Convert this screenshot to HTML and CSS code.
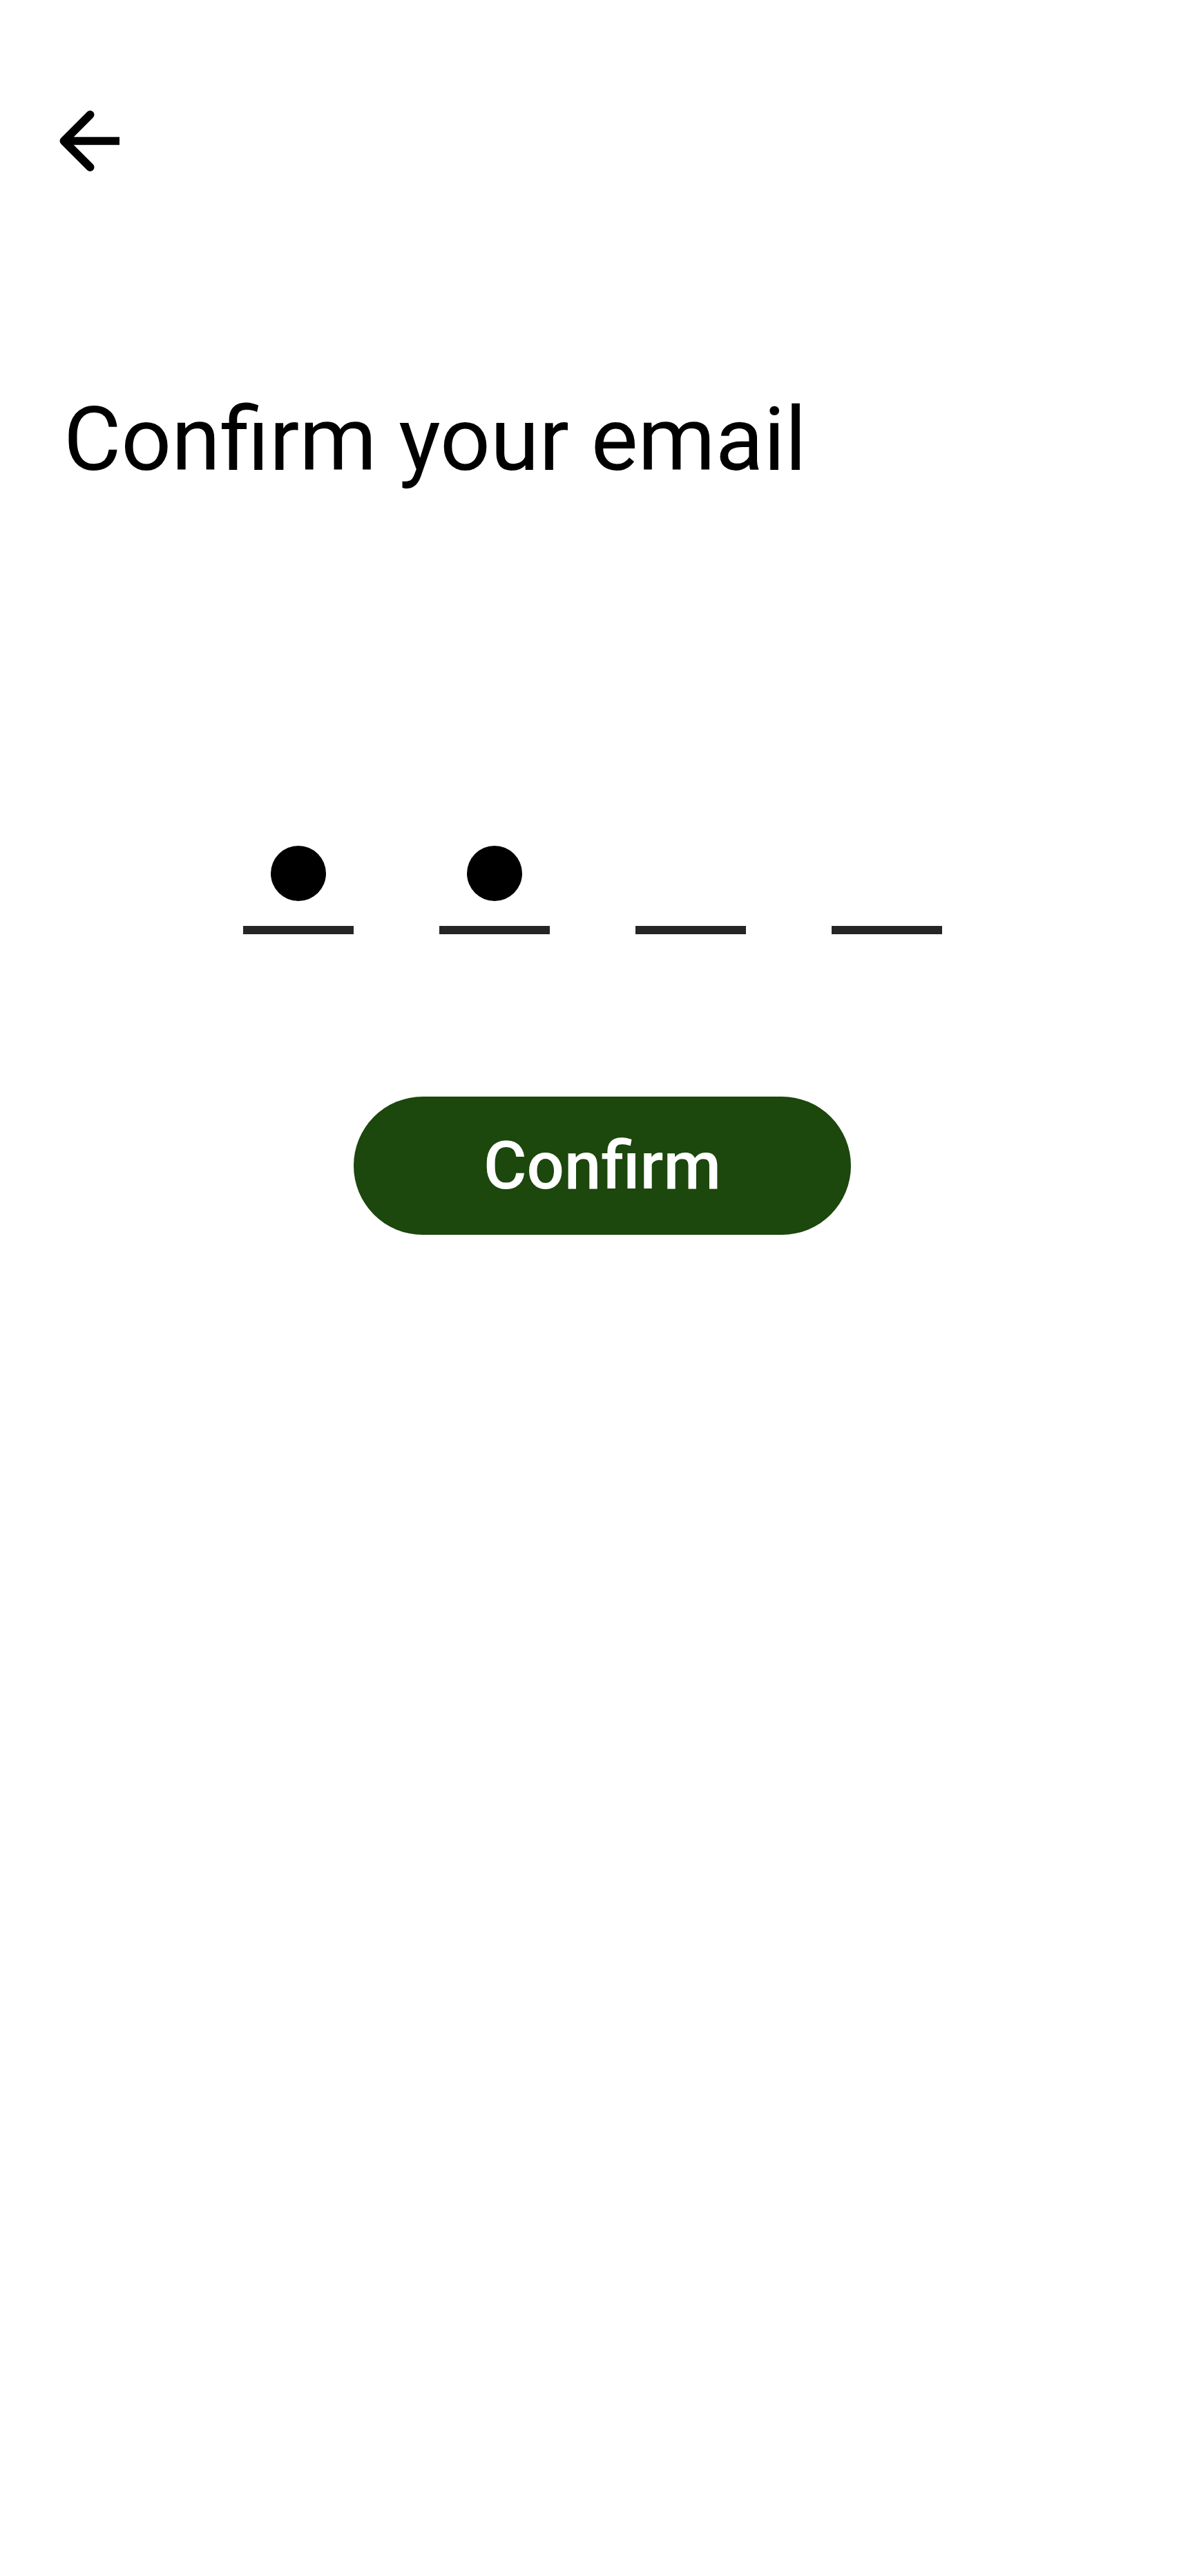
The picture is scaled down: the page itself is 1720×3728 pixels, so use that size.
FILE: index.html
```html
<!DOCTYPE html>
<html lang="en">
<head>
<meta charset="utf-8">
<title>Confirm your email</title>
<link rel="stylesheet" href="styles.css">
</head>
<body>
<div class="screen">
  <header class="topbar">
    <button class="back" aria-label="Back">
      <svg class="back-icon" width="100" height="100" viewBox="0 0 100 100">
        <polyline points="50.5,16 12.5,54 50.5,92" fill="none" stroke="#000" stroke-width="12" stroke-linecap="round" stroke-linejoin="round"/>
        <line x1="13" y1="54" x2="93" y2="54" stroke="#000" stroke-width="11.5" stroke-linecap="butt"/>
      </svg>
    </button>
  </header>
  <h1 class="title">Confirm your email</h1>
  <div class="otp">
    <div class="cell"><span class="dot"></span><span class="bar"></span></div>
    <div class="cell"><span class="dot"></span><span class="bar"></span></div>
    <div class="cell"><span class="bar"></span></div>
    <div class="cell"><span class="bar"></span></div>
  </div>
  <div class="actions">
    <button class="confirm">Confirm</button>
  </div>
</div>
</body>
</html>
```
FILE: styles.css
```css
html, body {
  margin: 0;
  padding: 0;
  background: #ffffff;
}
body {
  font-family: Roboto, "Liberation Sans", sans-serif;
  color: #000;
}
.screen {
  width: 1720px;
  min-height: 3728px;
  display: flex;
  flex-direction: column;
}
.topbar {
  padding: 150px 0 0 80px;
  display: flex;
}
.back {
  border: 0;
  background: none;
  padding: 0;
  width: 100px;
  height: 100px;
  display: block;
}
.back-icon {
  display: block;
}
.title {
  margin: 311px 0 0 92px;
  font-size: 128px;
  font-weight: 400;
  line-height: 150px;
  letter-spacing: 0;
}
.otp {
  margin-top: 513px;
  padding-right: 4px;
  display: flex;
  justify-content: center;
  gap: 124px;
}
.cell {
  width: 160px;
  height: 128px;
  display: flex;
  flex-direction: column;
  align-items: center;
  justify-content: flex-end;
}
.dot {
  width: 80px;
  height: 80px;
  border-radius: 50%;
  background: #000;
  margin-bottom: 36px;
}
.bar {
  width: 160px;
  height: 12px;
  background: #252525;
}
.actions {
  margin-top: 235px;
  padding-left: 24px;
  display: flex;
  justify-content: center;
}
.confirm {
  width: 720px;
  height: 200px;
  border: 0;
  border-radius: 100px;
  background: #1c470d;
  color: #fff;
  font-family: Roboto, "Liberation Sans", sans-serif;
  font-size: 96px;
  font-weight: 500;
  line-height: normal;
  padding: 0;
}
```
